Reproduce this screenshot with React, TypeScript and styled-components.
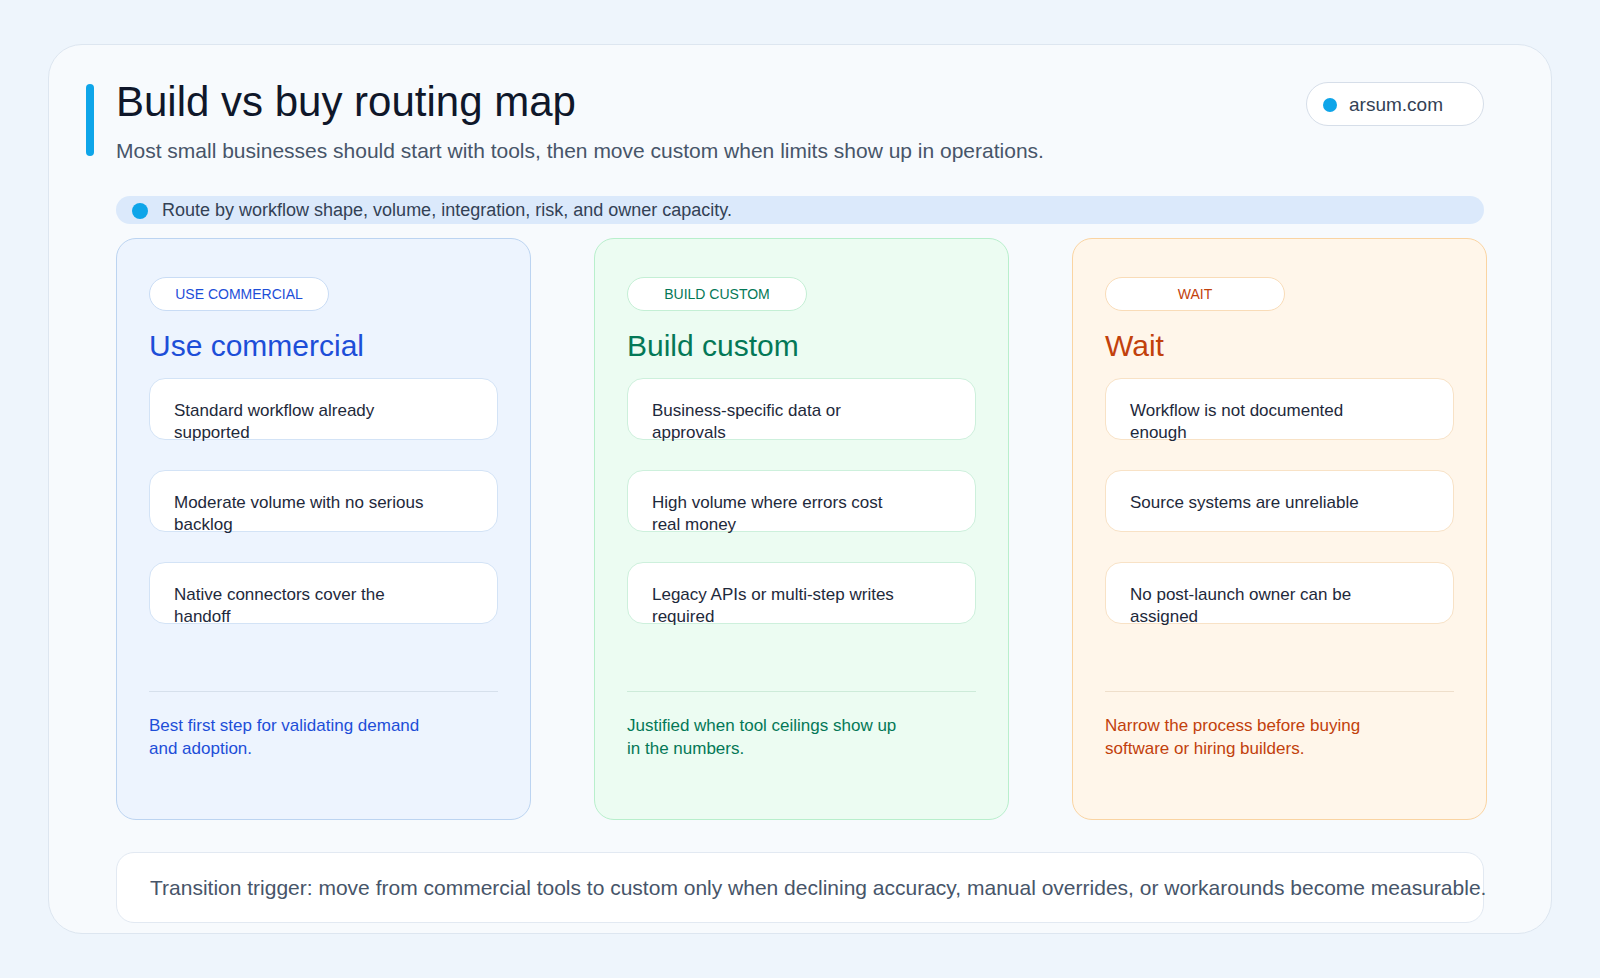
import React from 'react';
import styled, { createGlobalStyle } from 'styled-components';

type Tone = 'blue' | 'green' | 'orange';

const palette: Record<Tone, { bg: string; border: string; text: string; chip: string; item: string; rule: string }> = {
    blue: {
        bg: '#edf4fe',
        border: '#bcd4f1',
        text: '#1d4ed8',
        chip: '#c9dcf5',
        item: '#d3e3f6',
        rule: '#d6e0ec',
    },
    green: {
        bg: '#ecfcf2',
        border: '#b8efcc',
        text: '#047857',
        chip: '#c4efd5',
        item: '#cdf0dc',
        rule: '#cdebd9',
    },
    orange: {
        bg: '#fff6ea',
        border: '#fad4a2',
        text: '#c2410c',
        chip: '#f9dcb8',
        item: '#f8e2c6',
        rule: '#efdfcb',
    },
};

const GlobalStyle = createGlobalStyle`
    * { box-sizing: border-box; }
    html, body {
        margin: 0;
        padding: 0;
        background: #eef5fc;
        font-family: "Liberation Sans", Arial, Helvetica, sans-serif;
        -webkit-font-smoothing: antialiased;
    }
`;

const Page = styled.div`
    padding: 44px 48px;
`;

const Board = styled.div`
    background: #f7fafd;
    border: 1px solid #dde6f0;
    border-radius: 34px;
    padding: 34px 67px 10px;
`;

const Header = styled.header`
    position: relative;
    display: flex;
    justify-content: space-between;
    align-items: flex-start;

    // accent bar hanging left of the title block
    &::before {
        content: '';
        position: absolute;
        left: -30px;
        top: 5px;
        width: 8px;
        height: 72px;
        border-radius: 4px;
        background: #0ea5e9;
    }
`;

const Titles = styled.div`
    display: flex;
    flex-direction: column;
    gap: 11px;
`;

const Title = styled.h1`
    margin: 0;
    font-size: 42px;
    line-height: 46px;
    font-weight: 400;
    color: #0f172a;
`;

const Subtitle = styled.p`
    margin: 0;
    font-size: 21px;
    line-height: 29px;
    color: #475569;
`;

const Dot = styled.span<{ $size: number }>`
    flex: none;
    width: ${(p) => p.$size}px;
    height: ${(p) => p.$size}px;
    border-radius: 50%;
    background: #0ea5e9;
`;

const SitePill = styled.div`
    margin-top: 3px;
    height: 44px;
    display: flex;
    align-items: center;
    gap: 12px;
    padding: 2px 40px 0 16px;
    background: #fff;
    border: 1px solid #d6dee9;
    border-radius: 22px;
    font-size: 19px;
    color: #334155;
`;

const Banner = styled.div`
    margin-top: 31px;
    height: 28px;
    display: flex;
    align-items: center;
    gap: 14px;
    padding: 1px 0 0 16px;
    border-radius: 14px;
    background: #dbe9fb;
    font-size: 18px;
    color: #334155;
`;

const Columns = styled.div`
    margin-top: 14px;
    height: 582px;
    display: grid;
    grid-template-columns: repeat(3, 415px);
    gap: 63px;
`;

const Column = styled.section<{ $tone: Tone }>`
    display: flex;
    flex-direction: column;
    gap: 16px;
    padding: 38px 32px 59px;
    border-radius: 20px;
    border: 1.5px solid ${(p) => palette[p.$tone].border};
    background: ${(p) => palette[p.$tone].bg};
`;

const Chip = styled.div<{ $tone: Tone }>`
    width: 180px;
    height: 34px;
    display: flex;
    align-items: center;
    justify-content: center;
    border-radius: 17px;
    background: #fff;
    border: 1px solid ${(p) => palette[p.$tone].chip};
    font-size: 14px;
    text-transform: uppercase;
    color: ${(p) => palette[p.$tone].text};
`;

const ColumnTitle = styled.h2<{ $tone: Tone }>`
    margin: 0;
    padding-top: 2px;
    font-size: 30px;
    line-height: 33px;
    font-weight: 400;
    color: ${(p) => palette[p.$tone].text};
`;

const ItemList = styled.div`
    display: flex;
    flex-direction: column;
    gap: 30px;
`;

const Item = styled.div<{ $tone: Tone }>`
    height: 62px;
    padding: 21px 24px 0;
    background: #fff;
    border: 1px solid ${(p) => palette[p.$tone].item};
    border-radius: 16px;
    font-size: 17px;
    line-height: 22px;
    color: #1e293b;

    span {
        display: block;
        max-width: 256px;
    }
`;

const ColumnFoot = styled.div<{ $tone: Tone }>`
    margin-top: auto;
    border-top: 1px solid ${(p) => palette[p.$tone].rule};
    padding-top: 22px;
    font-size: 17px;
    line-height: 23px;
    color: ${(p) => palette[p.$tone].text};

    p {
        margin: 0;
        max-width: 282px;
    }
`;

const Trigger = styled.div`
    margin-top: 32px;
    height: 71px;
    display: flex;
    align-items: center;
    padding-left: 33px;
    background: #fff;
    border: 1px solid #e2e9f2;
    border-radius: 18px;
    font-size: 21px;
    color: #475569;
    white-space: nowrap;
`;

const routes: { tone: Tone; label: string; items: string[]; note: string }[] = [
    {
        tone: 'blue',
        label: 'Use commercial',
        items: [
            'Standard workflow already supported',
            'Moderate volume with no serious backlog',
            'Native connectors cover the handoff',
        ],
        note: 'Best first step for validating demand and adoption.',
    },
    {
        tone: 'green',
        label: 'Build custom',
        items: [
            'Business-specific data or approvals',
            'High volume where errors cost real money',
            'Legacy APIs or multi-step writes required',
        ],
        note: 'Justified when tool ceilings show up in the numbers.',
    },
    {
        tone: 'orange',
        label: 'Wait',
        items: [
            'Workflow is not documented enough',
            'Source systems are unreliable',
            'No post-launch owner can be assigned',
        ],
        note: 'Narrow the process before buying software or hiring builders.',
    },
];

export default function App() {
    return (
        <Page>
            <GlobalStyle />
            <Board>
                <Header>
                    <Titles>
                        <Title>Build vs buy routing map</Title>
                        <Subtitle>
                            Most small businesses should start with tools, then move custom when limits show up in operations.
                        </Subtitle>
                    </Titles>
                    <SitePill>
                        <Dot $size={14} />
                        arsum.com
                    </SitePill>
                </Header>

                <Banner>
                    <Dot $size={16} />
                    Route by workflow shape, volume, integration, risk, and owner capacity.
                </Banner>

                <Columns>
                    {routes.map((r) => (
                        <Column key={r.tone} $tone={r.tone}>
                            <Chip $tone={r.tone}>{r.label}</Chip>
                            <ColumnTitle $tone={r.tone}>{r.label}</ColumnTitle>
                            <ItemList>
                                {r.items.map((it) => (
                                    <Item key={it} $tone={r.tone}>
                                        <span>{it}</span>
                                    </Item>
                                ))}
                            </ItemList>
                            <ColumnFoot $tone={r.tone}>
                                <p>{r.note}</p>
                            </ColumnFoot>
                        </Column>
                    ))}
                </Columns>

                <Trigger>
                    Transition trigger: move from commercial tools to custom only when declining accuracy, manual overrides, or workarounds become measurable.
                </Trigger>
            </Board>
        </Page>
    );
}
